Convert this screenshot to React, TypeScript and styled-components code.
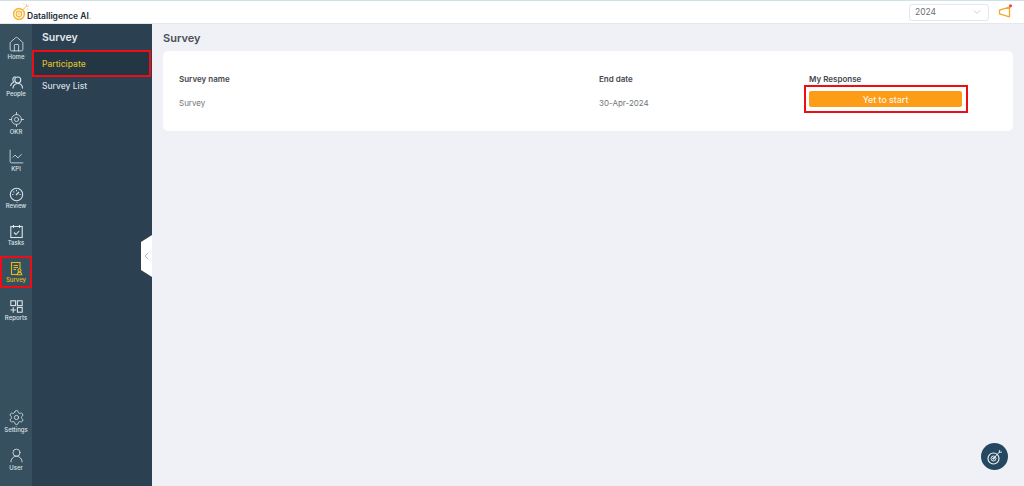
import styled, { createGlobalStyle } from 'styled-components';
import { ChevronDown, ChevronLeft, ChartLine, House, LocateFixed, Settings, UserRound } from 'lucide-react';
import type { ReactNode } from 'react';

const GlobalStyle = createGlobalStyle`
  html, body {
    margin: 0;
    padding: 0;
    height: 100%;
    overflow: hidden;
    font-family: Inter, "Liberation Sans", sans-serif;
    background: #f0f1f6;
  }
  * {
    box-sizing: border-box;
  }
`;

const Page = styled.div`
  display: flex;
  flex-direction: column;
  width: 1024px;
  height: 486px;
`;

const TopBar = styled.header`
  display: flex;
  align-items: center;
  justify-content: space-between;
  height: 24px;
  padding: 0 11px 0 12px;
  background: #fff;
  border-top: 1px solid #cfe0e6;
  border-bottom: 1px solid #e6e8ec;
`;

const Logo = styled.div`
  display: flex;
  align-items: center;
  font-size: 8.5px;
  font-weight: 600;
  color: #222c33;
  div {
    margin-left: -5px;
    padding-top: 7px;
  }
  span {
    color: #f5a81c;
  }
`;

const TopRight = styled.div`
  display: flex;
  align-items: center;
  gap: 8px;
`;

const YearSelect = styled.div`
  display: flex;
  align-items: center;
  justify-content: space-between;
  width: 80px;
  height: 17px;
  padding: 0 5px;
  border: 1px solid #e4e6ea;
  border-radius: 3px;
  font-size: 8.5px;
  color: #6a6f75;
`;

const Body = styled.div`
  display: flex;
  flex: 1;
  min-height: 0;
`;

const Rail = styled.nav`
  display: flex;
  flex-direction: column;
  width: 32px;
  padding: 5.5px 0 8.5px;
  background: #36505f;
`;

const RailItem = styled.div<{ $active?: boolean }>`
  display: flex;
  flex-direction: column;
  align-items: center;
  justify-content: center;
  height: 37.4px;
  font-size: 6px;
  font-weight: 500;
  line-height: 7px;
  color: ${(p) => (p.$active ? '#e3bd17' : '#dbe3e8')};
`;

const Marked = styled.div`
  display: flex;
  flex-direction: column;
  align-items: center;
  justify-content: center;
  flex-shrink: 0;
  width: 32px;
  height: 32px;
  margin-top: -1px;
  border: 2px solid #ec0e14;
`;

const RailSpacer = styled.div`
  flex: 1;
`;

const SubNav = styled.aside`
  position: relative;
  display: flex;
  flex-direction: column;
  width: 120px;
  background: #2b4151;
`;

const SubTitle = styled.div`
  height: 26px;
  padding: 7px 10px 0;
  font-size: 10.5px;
  line-height: 13px;
  font-weight: 600;
  color: #e3e8ec;
`;

const SubItem = styled.div<{ $active?: boolean }>`
  display: flex;
  align-items: center;
  height: ${(p) => (p.$active ? '27px' : '18px')};
  margin-right: ${(p) => (p.$active ? '1px' : '0')};
  padding-left: ${(p) => (p.$active ? '8px' : '10px')};
  font-size: 8.5px;
  font-weight: 500;
  color: ${(p) => (p.$active ? '#dfbd2a' : '#d6dde2')};
  background: ${(p) => (p.$active ? '#223644' : 'transparent')};
  border: ${(p) => (p.$active ? '2px solid #ec0e14' : 'none')};
`;

const CollapseHandle = styled.div`
  position: absolute;
  top: 211px;
  right: 0;
  width: 11px;
  height: 42px;
  display: flex;
  align-items: center;
  justify-content: center;
  background: #fff;
  color: #5f6d77;
  clip-path: polygon(0 7px, 100% 0, 100% 100%, 0 35px);
`;

const Main = styled.main`
  position: relative;
  flex: 1;
  padding: 0 11px;
`;

const PageTitle = styled.h1`
  margin: 0;
  height: 27px;
  padding-top: 7px;
  font-size: 11px;
  line-height: 14px;
  font-weight: 600;
  color: #4a4f55;
`;

const Card = styled.section`
  display: grid;
  grid-template-columns: 420px 210px 154px;
  grid-template-rows: 16px 24px;
  align-content: start;
  height: 80px;
  padding: 20px 16px;
  background: #fff;
  border-radius: 5px;
`;

const HeadCell = styled.div`
  display: flex;
  align-items: center;
  font-size: 8px;
  font-weight: 600;
  color: #43484e;
`;

const Cell = styled.div`
  display: flex;
  align-items: center;
  padding-top: 8px;
  font-size: 8px;
  color: #71767c;
`;

const ButtonFrame = styled.div`
  position: relative;
  display: flex;
  align-items: center;
`;

const StartButton = styled.button`
  width: 153px;
  height: 16px;
  padding: 0;
  border: none;
  border-radius: 2px;
  background: #fd9c17;
  color: #fdf3e4;
  font-family: inherit;
  font-size: 8.8px;
  font-weight: 500;
`;

const Highlight = styled.div`
  position: absolute;
  left: -5px;
  top: -2px;
  width: 164px;
  height: 28px;
  border: 2px solid #ec0e14;
`;

const Fab = styled.div`
  position: absolute;
  right: 16px;
  bottom: 16px;
  width: 27px;
  height: 27px;
  display: flex;
  align-items: center;
  justify-content: center;
  border-radius: 50%;
  background: #24485f;
`;

const icon = { size: 17, strokeWidth: 1.2 };

const PeopleIcon = () => (
  <svg width="15" height="15" viewBox="0 0 15 15" fill="none" stroke="currentColor" strokeWidth="1.1">
    <circle cx="8.800" cy="5" r="3" />
    <path d="M4 13.500c0-3 2-5 4.800-5s4.600 2 4.800 5" />
    <path d="M6.500 1.800C4.500 1.900 3.600 3.400 3.800 5c.1.800.4 1.400 1 1.900C3 7.700 1.800 9.300 1.500 11" />
  </svg>
);

const ReviewIcon = () => (
  <svg width="15" height="15" viewBox="0 0 15 15" fill="none" stroke="currentColor" strokeWidth="1.1">
    <circle cx="7.500" cy="7.500" r="6.200" />
    <path d="M7.500 3v1.200M3.200 7.500h1.200M10.600 7.500h1.200M4.500 4.500l.8.8" />
    <path d="M7 8l3-3" strokeWidth="1.300" />
  </svg>
);

const TasksIcon = () => (
  <svg width="15" height="15" viewBox="0 0 15 15" fill="none" stroke="currentColor" strokeWidth="1.1">
    <rect x="1.800" y="2.500" width="11.400" height="11" />
    <path d="M4.500 1v3M10.500 1v3M5 8.500l2 2 3.200-3.500" />
  </svg>
);

const SurveyIcon = () => (
  <svg width="15" height="15" viewBox="0 0 15 15" fill="none" stroke="currentColor" strokeWidth="1.1">
    <path d="M8 13.500H2.500V1.500h8.500v6" />
    <path d="M4.500 4.500h4.500M4.500 6.500h4.500M4.500 8.500h2.500" />
    <circle cx="10.500" cy="9.300" r="1.500" />
    <path d="M8.300 13.800c0-1.500 1-2.500 2.200-2.500s2.200 1 2.200 2.500z" />
  </svg>
);

const ReportsIcon = () => (
  <svg width="15" height="15" viewBox="0 0 15 15" fill="none" stroke="currentColor" strokeWidth="1.1">
    <rect x="1.800" y="1.800" width="4.800" height="4.800" />
    <rect x="8.400" y="1.800" width="4.800" height="4.800" />
    <rect x="8.400" y="8.400" width="4.800" height="4.800" />
    <path d="M4.200 8.300v5.400M1.500 11h5.400" />
  </svg>
);

const LogoMark = () => (
  <svg width="20" height="20" viewBox="0 0 20 20" fill="none">
    <circle cx="7" cy="12" r="5.400" stroke="#f6b93f" strokeWidth="1.600" />
    <circle cx="7" cy="12" r="2.700" stroke="#f6b93f" strokeWidth="1.400" />
    <circle cx="7" cy="12" r="0.900" fill="#f6b93f" />
    <path d="M8 11l6-6.500" stroke="#eec37c" strokeWidth="1" />
    <path d="M14 4.500l.6-2.500M14 4.500l3-.4M11 1.500l1.200 1.200M15 6.500l1.500.8" stroke="#f0cb8c" strokeWidth="1" />
  </svg>
);

const Megaphone = () => (
  <svg width="16" height="16" viewBox="0 0 16 16" fill="none">
    <path d="M2.500 6.200L12.500 3.200v9.600L2.500 9.800z" stroke="#f6a623" strokeWidth="1.300" strokeLinejoin="round" />
    <circle cx="13.500" cy="1.800" r="1.600" fill="#f2434a" />
  </svg>
);

const FabIcon = () => (
  <svg width="18" height="18" viewBox="0 0 18 18" fill="none" stroke="#e8edf0">
    <circle cx="7.500" cy="10.500" r="5.500" strokeWidth="1.200" />
    <circle cx="7.500" cy="10.500" r="2.500" strokeWidth="1" />
    <circle cx="7.500" cy="10.500" r="0.800" fill="#e8edf0" />
    <path d="M8 10l5-5.500M13 4.500l.8-2.500M13 4.500l2.800-.5" strokeWidth="1" />
  </svg>
);

const topItems: { label: string; icon: ReactNode; active?: boolean }[] = [
  { label: 'Home', icon: <House {...icon} /> },
  { label: 'People', icon: <PeopleIcon /> },
  { label: 'OKR', icon: <LocateFixed {...icon} /> },
  { label: 'KPI', icon: <ChartLine {...icon} /> },
  { label: 'Review', icon: <ReviewIcon /> },
  { label: 'Tasks', icon: <TasksIcon /> },
  { label: 'Survey', icon: <SurveyIcon />, active: true },
  { label: 'Reports', icon: <ReportsIcon /> },
];

const App = () => {
  return (
    <Page>
      <GlobalStyle />
      <TopBar>
        <Logo>
          <LogoMark />
          <div>
            Datalligence AI<span>.</span>
          </div>
        </Logo>
        <TopRight>
          <YearSelect>
            2024
            <ChevronDown size={12} strokeWidth={1} color="#9aa0a6" />
          </YearSelect>
          <Megaphone />
        </TopRight>
      </TopBar>
      <Body>
        <Rail>
          {topItems.map((item) => (
            <RailItem key={item.label} $active={item.active}>
              {item.active ? (
                <Marked>
                  {item.icon}
                  {item.label}
                </Marked>
              ) : (
                <>
                  {item.icon}
                  {item.label}
                </>
              )}
            </RailItem>
          ))}
          <RailSpacer />
          <RailItem>
            <Settings {...icon} />
            Settings
          </RailItem>
          <RailItem>
            <UserRound {...icon} />
            User
          </RailItem>
        </Rail>
        <SubNav>
          <SubTitle>Survey</SubTitle>
          <SubItem $active>Participate</SubItem>
          <SubItem>Survey List</SubItem>
          <CollapseHandle>
            <ChevronLeft size={12} strokeWidth={1.2} />
          </CollapseHandle>
        </SubNav>
        <Main>
          <PageTitle>Survey</PageTitle>
          <Card>
            <HeadCell>Survey name</HeadCell>
            <HeadCell>End date</HeadCell>
            <HeadCell>My Response</HeadCell>
            <Cell>Survey</Cell>
            <Cell>30-Apr-2024</Cell>
            <ButtonFrame>
              <StartButton>Yet to start</StartButton>
              <Highlight />
            </ButtonFrame>
          </Card>
          <Fab>
            <FabIcon />
          </Fab>
        </Main>
      </Body>
    </Page>
  );
};

export default App;
